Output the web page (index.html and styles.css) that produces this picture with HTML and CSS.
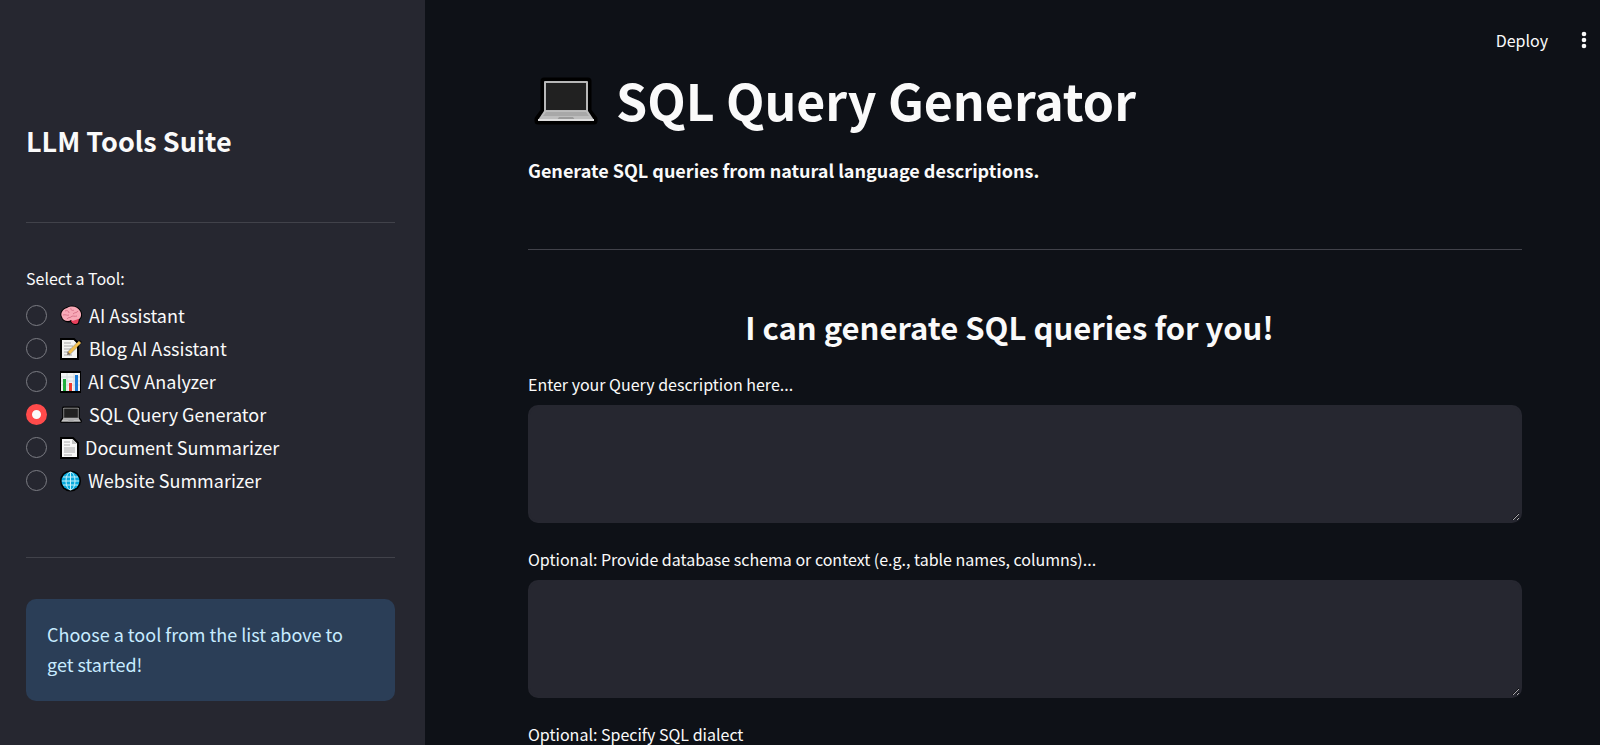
FILE: index.html
```html
<!DOCTYPE html>
<html lang="en">
<head>
<meta charset="utf-8">
<meta name="viewport" content="width=device-width, initial-scale=1">
<title>SQL Query Generator</title>
<link rel="stylesheet" href="styles.css">
</head>
<body>
<svg class="sprite" aria-hidden="true">
  <symbol id="laptop" viewBox="0 0 64 50">
    <path d="M10 4H54V34L60 42V44H4V42L10 34Z" fill="#000" stroke="#000" stroke-width="7" stroke-linejoin="round"/>
    <path d="M10 5Q10 4 11 4H53Q54 4 54 5V35H10Z" fill="#b8b8b8"/>
    <path d="M12 6H52V33H12Z" fill="#212121"/>
    <path d="M10 34H54L60 43H4Z" fill="#bdbdbd"/>
    <path d="M12 35H52L55 39H9Z" fill="#a8a8a8"/>
    <path d="M25 40H39L41 43H23Z" fill="#9a9a9a"/>
    <path d="M4 42H60V44H4Z" fill="#dedede"/>
  </symbol>
  <symbol id="brain" viewBox="0 0 22 22">
    <path d="M2 12C0 8 3 4 7 3C12 0 18 2 20 6C22 9 21 13 19 14L18 18C16 20 12 19 11 16C8 17 3 16 2 12Z" fill="#f6a5b4" stroke="#000" stroke-width="2"/>
    <path d="M11 15C13 17 16 14 19 14L18 18C16 20 12 19 11 16Z" fill="#e9405c"/>
    <path d="M2 12C0 8 3 4 7 3C12 0 18 2 20 6C22 9 21 13 19 14C15 14 14 16 11 15C8 17 3 16 2 12Z" fill="#f8a9b7"/>
    <path d="M5 6C7 5 9 6 9 8M3 10C6 9 7 11 9 10M11 3C10 5 13 6 14 5M13 9C15 7 17 8 18 6M11 12C12 10 15 12 17 11M7 14C8 12 10 13 11 12" fill="none" stroke="#d9758b"/>
  </symbol>
  <symbol id="memo" viewBox="0 0 22 22">
    <path d="M1 1H14L18 5V21H1Z" fill="#f3f3f1" stroke="#000" stroke-width="2"/>
    <path d="M2 2H13L17 6V20H2Z" fill="#f3f3f1"/>
    <path d="M4 5H11M4 8H13M4 11H11M4 14H9M4 17H12" stroke="#a9a9a9"/>
    <path d="M8 16L20 4" stroke="#000" stroke-width="4" opacity=".3"/>
    <path d="M18 4L20 2L22 4L20 6Z" fill="#111"/>
    <path d="M9 15L20 4" stroke="#f2bf4f" stroke-width="3"/>
    <path d="M7 17L8 14L10 16Z" fill="#77604a"/>
  </symbol>
  <symbol id="chart" viewBox="0 0 22 22">
    <path d="M0 0H21V22H0Z" fill="#000"/>
    <path d="M1 2H20V20H1Z" fill="#f1f3f3"/>
    <path d="M1 6H20M1 10H20M1 14H20M7 2V20M14 2V20" stroke="#d3dadd"/>
    <path d="M3 8H6V20H3Z" fill="#1fae3d"/>
    <path d="M9 12H12V20H9Z" fill="#ee3b2d"/>
    <path d="M15 4H18V20H15Z" fill="#1879d6"/>
  </symbol>
  <symbol id="page" viewBox="0 0 22 22">
    <path d="M1 1H13L18 6V21H1Z" fill="#f4f4f4" stroke="#000" stroke-width="2"/>
    <path d="M2 2H12V7H17V20H2Z" fill="#f7f7f7"/>
    <path d="M12 2L17 7H12Z" fill="#c4c4c4"/>
    <path d="M4 5H10M4 8H10M4 11H15M4 13H15M4 15H15M4 18H12" stroke="#acacac"/>
  </symbol>
  <symbol id="globe" viewBox="0 0 22 22">
    <circle cx="10.500" cy="11" r="10.500" fill="#000"/>
    <circle cx="10.500" cy="11" r="9" fill="#08aadd"/>
    <g fill="none" stroke="#c5f2fb">
      <ellipse cx="10.500" cy="11" rx="4.500" ry="9"/>
      <path d="M10.500 2V20M2 11H19M3 7H18M3 15H18"/>
    </g>
  </symbol>
</svg>
<div class="app">
  <aside class="sidebar">
    <h2 class="suite-title">LLM Tools Suite</h2>
    <hr class="rule">
    <fieldset class="tools">
      <legend class="tools-legend">Select a Tool:</legend>
      <label class="tool"><input type="radio" name="tool"><svg class="emoji emoji-wide"><use href="#brain"/></svg><span>AI Assistant</span></label>
      <label class="tool"><input type="radio" name="tool"><svg class="emoji emoji-wide"><use href="#memo"/></svg><span>Blog AI Assistant</span></label>
      <label class="tool"><input type="radio" name="tool"><svg class="emoji"><use href="#chart"/></svg><span>AI CSV Analyzer</span></label>
      <label class="tool"><input type="radio" name="tool" checked><svg class="emoji emoji-wide"><use href="#laptop"/></svg><span>SQL Query Generator</span></label>
      <label class="tool"><input type="radio" name="tool"><svg class="emoji emoji-narrow"><use href="#page"/></svg><span>Document Summarizer</span></label>
      <label class="tool"><input type="radio" name="tool"><svg class="emoji"><use href="#globe"/></svg><span>Website Summarizer</span></label>
    </fieldset>
    <hr class="rule">
    <p class="notice">Choose a tool from the list above to get started!</p>
  </aside>
  <main class="main">
    <div class="toolbar">
      <button class="deploy" type="button">Deploy</button>
      <button class="menu" type="button" aria-label="Menu">
        <svg class="dots" viewBox="0 0 6 18"><circle cx="3" cy="3" r="2.300"/><circle cx="3" cy="9" r="2.300"/><circle cx="3" cy="15" r="2.300"/></svg>
      </button>
    </div>
    <h1 class="page-title"><svg class="title-icon"><use href="#laptop"/></svg><span>SQL Query Generator</span></h1>
    <p class="lead">Generate SQL queries from natural language descriptions.</p>
    <hr class="rule">
    <h2 class="prompt-title">I can generate SQL queries for you!</h2>
    <form class="form">
      <div class="field">
        <label for="description">Enter your Query description here...</label>
        <textarea id="description"></textarea>
      </div>
      <div class="field">
        <label for="schema">Optional: Provide database schema or context (e.g., table names, columns)...</label>
        <textarea id="schema"></textarea>
      </div>
      <div class="field">
        <label for="dialect">Optional: Specify SQL dialect</label>
        <select id="dialect"></select>
      </div>
    </form>
  </main>
</div>
</body>
</html>
```
FILE: styles.css
```css
* {
  box-sizing: border-box;
}

body {
  margin: 0;
  background: #0e1117;
  color: #fafafa;
  color-scheme: dark;
  font-family: "Noto Sans CJK JP", "Noto Sans", sans-serif;
  font-size: 18px;
  line-height: 30px;
}

h1, h2, p {
  margin: 0;
}

.sprite {
  position: absolute;
  width: 0;
  height: 0;
}

.app {
  display: grid;
  grid-template-columns: 425px 1fr;
  height: 100vh;
}

.sidebar,
.main {
  overflow-y: auto;
  scrollbar-width: none;
}

.sidebar {
  padding: 121px 30px 40px 26px;
  background: #262730;
}

.rule {
  height: 1px;
  margin: 0;
  border: 0;
  background: #41424a;
}

.suite-title {
  margin-bottom: 61px;
  font-size: 27px;
  line-height: 40px;
}

.tools {
  margin: 0;
  padding: 42px 0 60px;
  border: 0;
}

.tools-legend {
  float: left;
  width: 100%;
  padding: 0;
  margin-bottom: 8px;
  font-size: 16px;
  line-height: 26px;
}

.tool {
  clear: both;
  display: flex;
  align-items: center;
  height: 33px;
}

.tool span {
  padding-bottom: 2px;
}

.tool input {
  appearance: none;
  width: 21px;
  height: 21px;
  margin: 0 13px 0 0;
  border: 1px solid #7b7c83;
  border-radius: 50%;
}

.tool input:checked {
  border: 6px solid #ff4b4b;
  background: #fafafa;
}

.emoji {
  width: 22px;
  height: 22px;
  margin-right: 6px;
}

.emoji-wide {
  margin-right: 7px;
}

.emoji-narrow {
  margin-right: 3px;
}

.notice {
  margin-top: 41px;
  padding: 20px 24px 22px 21px;
  border-radius: 10px;
  background: #2b3e57;
  color: #c7ebff;
}

.main {
  position: relative;
  padding: 66px 78px 0 103px;
}

.toolbar {
  position: absolute;
  top: 25px;
  right: 13px;
  display: flex;
  align-items: center;
  gap: 33px;
}

.toolbar button {
  padding: 0;
  border: 0;
  background: none;
  color: inherit;
  font: inherit;
}

.toolbar .deploy {
  font-size: 16px;
}

.dots {
  display: block;
  width: 6px;
  height: 18px;
  fill: #fafafa;
}

.page-title {
  display: flex;
  align-items: center;
  gap: 18px;
  padding-left: 6px;
  font-size: 50px;
  line-height: 66px;
}

.page-title span {
  padding-bottom: 6px;
}

.title-icon {
  width: 64px;
  height: 50px;
}

.lead {
  margin: 17px 0 64px;
  font-weight: 700;
}

.prompt-title {
  margin: 52px 0 18px;
  padding-right: 31px;
  font-size: 31px;
  line-height: 50px;
  text-align: center;
}

.form {
  display: grid;
  gap: 22px;
}

.field {
  display: grid;
  gap: 7px;
}

.field label {
  font-size: 16px;
  line-height: 28px;
}

.field textarea,
.field select {
  width: 100%;
  border: 2px solid #262730;
  border-radius: 10px;
  background: #262730;
  color: inherit;
  font: inherit;
}

.field textarea {
  height: 118px;
  padding: 12px;
  resize: vertical;
}

.field select {
  height: 50px;
}
```
